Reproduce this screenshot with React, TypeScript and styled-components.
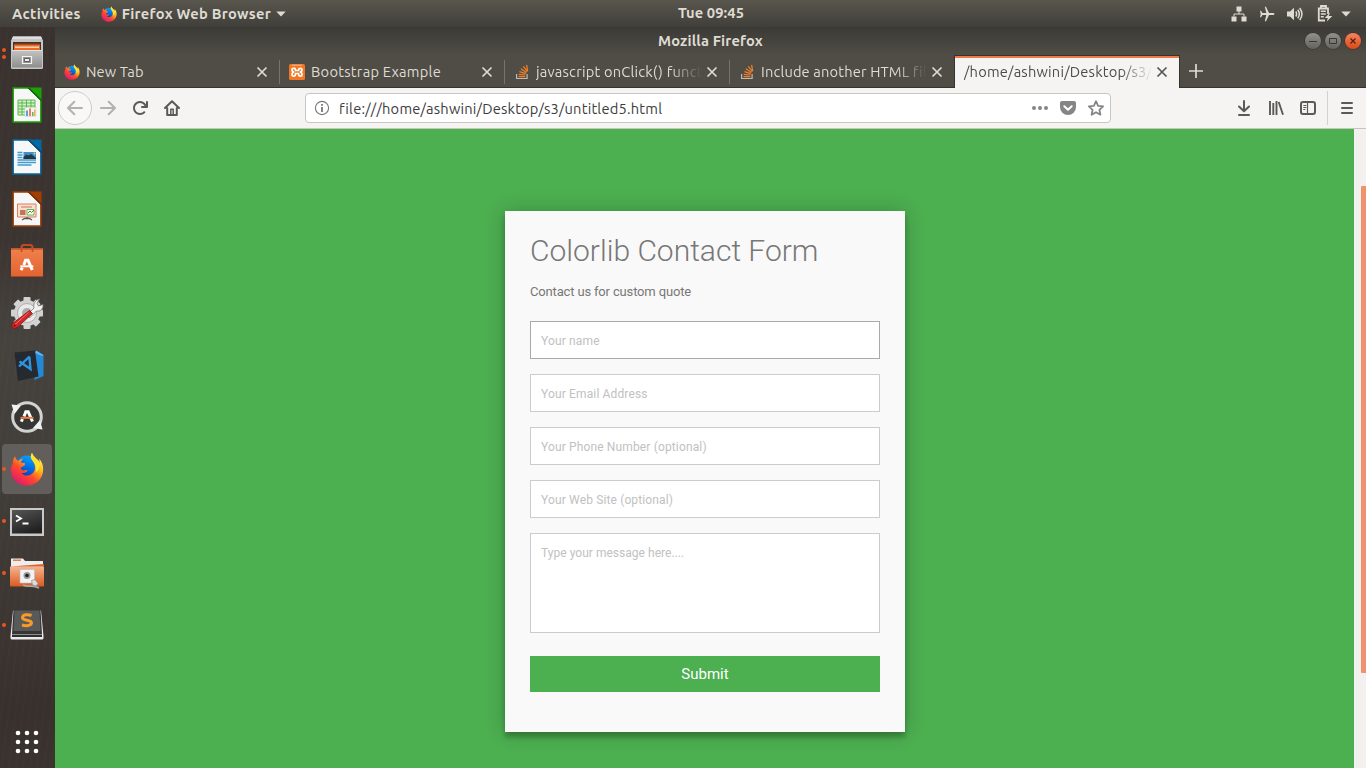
import React from "react";
import styled, { createGlobalStyle, css } from "styled-components";

const Global = createGlobalStyle`
  * { box-sizing: border-box; }
  body { margin: 0; overflow: hidden; background: #3a3330; }
  svg { display: block; flex: none; }
`;

const uiFont = `"Ubuntu", "Noto Sans", "Open Sans", sans-serif`;

const Desktop = styled.div`
  width: 1366px;
  height: 768px;
  display: flex;
  flex-direction: column;
  overflow: hidden;
  font-family: ${uiFont};
  font-size: 14.667px;
`;

const Label = styled.span<{ $spacing?: number }>`
  white-space: nowrap;
  letter-spacing: ${(p) => p.$spacing ?? 0.2}px;
`;

/* ---------- top panel ---------- */

const TopPanel = styled.header`
  height: 27px;
  flex: none;
  display: grid;
  grid-template-columns: 1fr auto 1fr;
  align-items: center;
  padding: 0 15px 0 12px;
  background: linear-gradient(#59564d, #403f3a);
  color: #dfdbd2;
  font-weight: 700;
  line-height: 27px;
`;

const PanelLeft = styled.div`
  display: flex;
  align-items: center;
`;

const AppMenu = styled.div`
  display: flex;
  align-items: center;
  margin-left: 20px;
  gap: 5px;
`;

const Clock = styled.div`
  padding-left: 59px;
  margin-top: -3px;
`;

const Tray = styled.div`
  display: flex;
  justify-content: flex-end;
  align-items: center;
  gap: 12px;
  & > :last-child { margin-left: -4px; }
`;

/* ---------- dock ---------- */

const Workspace = styled.div`
  flex: 1;
  min-height: 0;
  display: flex;
`;

const Dock = styled.nav`
  width: 55px;
  flex: none;
  display: flex;
  flex-direction: column;
  gap: 2px;
  padding: 1px 3px 0 2px;
  background:
    repeating-linear-gradient(97deg, rgba(255, 255, 255, 0.012) 0 2px, transparent 2px 7px),
    linear-gradient(#3a322f 0, #3b3431 28%, #46433e 42%, #423e3a 58%, #3e3834 75%, #38302d 92%, #3b3330 100%);
`;

const DockItem = styled.div<{ $active?: boolean; $last?: boolean }>`
  position: relative;
  height: 50px;
  flex: none;
  display: flex;
  align-items: center;
  justify-content: center;
  border-radius: 4px;
  ${(p) => p.$active && css`background: #625e5b;`}
  ${(p) => p.$last && css`margin: auto 0 1px;`}
`;

const Dots = styled.div`
  position: absolute;
  left: 0;
  top: 0;
  height: 100%;
  display: flex;
  flex-direction: column;
  justify-content: center;
  gap: 3px;
`;

const Dot = styled.i`
  width: 4px;
  height: 4px;
  border-radius: 50%;
  background: #e95420;
`;

/* ---------- browser window ---------- */

const Window = styled.main`
  flex: 1;
  min-width: 0;
  display: flex;
  flex-direction: column;
`;

const Chrome = styled.div`
  flex: none;
  height: 61px;
  display: flex;
  flex-direction: column;
  background: linear-gradient(#3b3a36, #504d46 28px, #504d46);
`;

const TitleBar = styled.div`
  height: 28px;
  display: grid;
  grid-template-columns: 1fr auto 1fr;
  align-items: center;
  padding-right: 5px;
  font-weight: 700;
  color: #dfdbd2;
`;

const WindowTitle = styled.div`
  padding-left: 5px;
  margin-top: -2px;
`;

const WindowButtons = styled.div`
  display: flex;
  justify-content: flex-end;
  gap: 4px;
`;

const WindowButton = styled.button<{ $close?: boolean }>`
  width: 16px;
  height: 16px;
  padding: 0;
  display: grid;
  place-items: center;
  border: 0;
  border-radius: 50%;
  background: ${(p) => (p.$close ? "linear-gradient(#f7845f, #dd4814)" : "linear-gradient(#92918c, #64625c)")};
  box-shadow: 0 0 0 0.6px #32302b;
`;

const TabStrip = styled.div`
  height: 33px;
  display: flex;
  border-bottom: 1px solid #36342f;
`;

const Tab = styled.div<{ $active?: boolean; $divider?: boolean }>`
  position: relative;
  width: 225px;
  flex: none;
  display: flex;
  align-items: center;
  padding: 1px 12px 0 9px;
  color: #dfdbd2;
  ${(p) =>
    p.$divider &&
    css`
      &::after {
        content: "";
        position: absolute;
        right: 0;
        top: 5px;
        width: 1px;
        height: 24px;
        background: #77746c;
      }
    `}
  ${(p) =>
    p.$active &&
    css`
      width: 226px;
      height: 33px;
      margin-left: -1px;
      padding: 0 11px 0 9px;
      background: #f5f4f2;
      color: #4c4c4c;
      border: solid #36342f;
      border-width: 1px 1px 0;
      box-shadow: inset 0 2px #f07746;
    `}
`;

const TabTitle = styled.div<{ $inset: number; $fade?: boolean }>`
  flex: 1;
  min-width: 0;
  overflow: hidden;
  margin-left: ${(p) => p.$inset}px;
  margin-right: 4px;
  line-height: 22px;
  ${(p) => p.$fade && css`mask-image: linear-gradient(to left, transparent 0, #000 32px);`}
`;

const NewTab = styled.div`
  width: 32px;
  display: grid;
  place-items: center;
  padding-bottom: 1px;
`;

const NavBar = styled.div`
  height: 41px;
  flex: none;
  display: flex;
  align-items: center;
  padding: 0 11px 0 3px;
  background: #f5f4f2;
  border-bottom: 1px solid #c8c5c1;
  color: #5a5a5a;
`;

const BackButton = styled.div`
  width: 34px;
  height: 34px;
  display: grid;
  place-items: center;
  border: 1px solid #cfcdca;
  border-radius: 50%;
  background: #f9f8f7;
  color: #b2b1af;
`;

const NavIcons = styled.div`
  display: flex;
  gap: 16px;
  margin-left: 8px;
`;

const UrlBar = styled.div`
  width: 806px;
  height: 30px;
  margin-left: 125px;
  display: flex;
  align-items: center;
  padding: 0 6px 0 8px;
  background: #fff;
  border: 1px solid #c9c6c3;
  border-radius: 4px;
  color: #3c3c3c;
`;

const UrlText = styled.div`
  flex: 1;
  margin-left: 9px;
  padding-top: 1px;
  line-height: 22px;
`;

const UrlActions = styled.div`
  display: flex;
  gap: 12px;
  color: #858585;
`;

const RightTools = styled.div`
  margin-left: auto;
  display: flex;
  align-items: center;
  gap: 16px;
`;

const ToolDivider = styled.i`
  width: 1px;
  height: 34px;
  margin: 0 -5px 0 -5px;
  background: #d3d1ce;
`;

/* ---------- page ---------- */

const Viewport = styled.div`
  flex: 1;
  min-height: 0;
  display: flex;
`;

const Page = styled.div`
  flex: 1;
  display: flex;
  justify-content: center;
  align-items: flex-start;
  padding: 82px 0 0 1px;
  background: #4caf50;
  font-family: Roboto, sans-serif;
`;

const ScrollTrack = styled.div`
  width: 12px;
  flex: none;
  padding: 57px 0 0 7px;
  background: #f2f1f0;
`;

const ScrollThumb = styled.div`
  height: 487px;
  background: #f0926e;
  border-radius: 1px 0 0 1px;
`;

const Card = styled.form`
  width: 400px;
  height: 521px;
  display: flex;
  flex-direction: column;
  padding: 25px;
  background: #f9f9f9;
  box-shadow: 0 0 20px rgba(0, 0, 0, 0.2), 0 5px 5px rgba(0, 0, 0, 0.24);
  color: #777;
`;

const Title = styled.h3`
  margin: 0;
  font-size: 30px;
  font-weight: 300;
  line-height: 30px;
`;

const Subtitle = styled.h4`
  margin: 18px 0 21px;
  font-size: 13px;
  font-weight: 400;
  line-height: 16px;
  letter-spacing: -0.16px;
`;

const fieldStyle = css`
  display: block;
  width: 100%;
  flex: none;
  margin: 0 0 15px;
  padding: 11px 10px 9px;
  background: #fff;
  border: 1px solid #ccc;
  border-radius: 0;
  outline: 0;
  resize: none;
  font: 400 12px/16px Roboto, sans-serif;
  letter-spacing: 0.14px;
  &::placeholder { color: #c1c1c1; opacity: 1; }
`;

const Field = styled.input<{ $hover?: boolean }>`
  ${fieldStyle}
  height: 38px;
  ${(p) => p.$hover && css`border-color: #aaa;`}
`;

const Message = styled.textarea`
  ${fieldStyle}
  height: 100px;
  margin-bottom: 23px;
  letter-spacing: 0.03px;
`;

const Submit = styled.button`
  height: 36px;
  padding: 0;
  border: 0;
  background: #4caf50;
  color: #fff;
  font: 400 15px/36px Roboto, sans-serif;
`;

/* ---------- icons ---------- */

const Firefox = ({ size, id }: { size: number; id: string }) => (
  <svg width={size} height={size} viewBox="0 0 34 34">
    <defs>
      <linearGradient id={id + "a"} x1="0.85" y1="0.1" x2="0.2" y2="0.95">
        <stop offset="0" stopColor="#fff44f" />
        <stop offset="0.3" stopColor="#ffb81c" />
        <stop offset="0.6" stopColor="#ff4a2a" />
        <stop offset="1" stopColor="#e3166f" />
      </linearGradient>
      <linearGradient id={id + "b"} x1="0.7" y1="0" x2="0.3" y2="1">
        <stop offset="0" stopColor="#0aa6fb" />
        <stop offset="0.55" stopColor="#0060df" />
        <stop offset="1" stopColor="#20217c" />
      </linearGradient>
    </defs>
    <circle cx="17" cy="16.5" r="13" fill={`url(#${id}b)`} />
    <path
      d="M22 .8c-1.8 3-1.5 5.3.3 7.500 2 2.600 3 5 2.700 8-.4 4.500-4 7.200-7.800 7.200-2.500 0-4.500-1-5.700-2.600 2.300.6 4.200-.1 5.800-1.600.5-.5.3-1.100-.4-1.200-1.700-.1-2.700.7-4.300.2-1.300-.4-1.800-1.500-1.700-2.700l3.800-2.200c.3-.8.3-1.600.1-2.300-1.400.1-2.900-.1-3.700-.7.1-1.600 1-3 2.200-4-2.100.1-3.800 1-5 2.400C6.800 8.300 5.600 6.700 5 4.600 3.300 6.600 2.800 9 2.800 11.600.8 15 .3 18.300 1.200 21.700 3 28.800 9.500 33.500 17 33.500c9.300 0 16.200-7 16.200-16.300 0-4.300-1.500-8-4.200-10.700.5 1.800.6 3 .5 4.500C27.700 7.500 23.300 5.500 22 .8z"
      fill={`url(#${id}a)`}
    />
    <path d="M22 .8c-1.800 3-1.500 5.300.3 7.500 2.700 3.500 4.700 7 3.400 12.200 3-2.400 5-7 3.800-10.500C27.700 6.500 23.300 5.500 22 .8z" fill="#ffe22e" />
  </svg>
);

const FilesIcon = () => (
  <svg width="34" height="36" viewBox="0 0 34 36">
    <defs>
      <linearGradient id="cab" x2="0" y2="1">
        <stop offset="0" stopColor="#c4c4c4" />
        <stop offset="1" stopColor="#8e8e8e" />
      </linearGradient>
    </defs>
    <path d="M3 1.500h28l2 4v27a1.500 1.500 0 0 1-1.500 1.500h-29A1.500 1.500 0 0 1 1 32.500v-27z" fill="#c6c6c6" />
    <path d="M3 1.500h28l1 2.500H2z" fill="#dedede" />
    <path d="M3 7h28v9H3z" fill="#3b3734" />
    <path d="M5 8h24v2H5z" fill="#7a3412" />
    <path d="M4 9.500h26v6H4z" fill="#e96b24" />
    <path d="M5 11.500h24v1.400H5z" fill="#ffe0c2" />
    <path d="M2 15h30v17.500H2z" fill="url(#cab)" />
    <path d="M2 15h30v1H2z" fill="#e0e0e0" />
    <path d="M12.500 21.500h9v7h-9z" fill="#929292" stroke="#f4f4f4" strokeWidth="1.200" />
    <path d="M14.500 23.500h5v3h-5z" fill="#eee" stroke="#555" strokeWidth=".9" />
  </svg>
);

const Doc = ({ color, dark, children }: { color: string; dark: string; children: React.ReactNode }) => (
  <svg width="30" height="36" viewBox="0 0 30 36">
    <path d="M1.200 1h16L28.800 13v22H1.200z" fill="#f7f7f7" stroke={color} strokeWidth="1.400" />
    <path d="M17 .4h12.500V12.500z" fill={color} />
    <path d="M17 .5L29.500 13v1.500L15.500 1z" fill={dark} />
    {children}
  </svg>
);

const CalcIcon = () => (
  <Doc color="#18a303" dark="#0d5c05">
    <path d="M6 13h17v15H6z" fill="#d6f0cf" />
    <path d="M6 13h17v15H6zM6 16h17M6 19h17M6 22h17M6 25h17M10 13v15M14.500 13v15M19 13v15" fill="none" stroke="#5cb84a" strokeWidth="1" />
    <path d="M13 20.500h11v9H13z" fill="#f5f5f5" stroke="#ccc" strokeWidth=".5" />
    <path d="M14 23.500h2V29h-2z" fill="#5ba1d8" />
    <path d="M17 21.500h2V29h-2z" fill="#e98057" />
    <path d="M20 25h1.500v4H20z" fill="#69b356" />
    <path d="M22 22.500h1.500V29H22z" fill="#edb44d" />
  </Doc>
);

const WriterIcon = () => (
  <Doc color="#0369a3" dark="#084469">
    <path d="M5.500 13.500h5M5.500 16h5M5.500 18.500h5M5.500 21h18.500M5.500 23.500h18.500M5.500 26h14" stroke="#3f9bd0" strokeWidth="1.300" />
    <path d="M11.500 13h12.500v7H11.500z" fill="#3d8fd0" />
    <path d="M11.500 20v-2l3-2.500 2 1 2.500-1.500 5 4v1z" fill="#263840" />
    <circle cx="22.500" cy="14.500" r="1" fill="#f9dc3c" />
  </Doc>
);

const ImpressIcon = () => (
  <Doc color="#a33e03" dark="#6b2802">
    <path d="M5.500 13h18.500v13H5.500z" fill="#fae0d3" stroke="#df7d55" strokeWidth="1" />
    <path d="M9 16h11" stroke="#d98c6e" strokeWidth="1.300" />
    <path d="M8 19h5.500v5H8z" fill="#c97355" />
    <path d="M15 18.500h7v5.500h-7z" fill="#fff" stroke="#6ab556" strokeWidth="1" />
    <path d="M16 22l2-2 1.500 1.500L22 19" fill="none" stroke="#319b25" />
    <path d="M15 26v1.500M10 29l2.500-1.500h5L20 29" fill="none" stroke="#555" strokeWidth="1.300" />
  </Doc>
);

const ABars = ({ bar = "#fff" }: { bar?: string }) => (
  <g fill="none">
    <path d="M14 18l1.800-4.700h2.400l4.300 9.700M12.500 20.500l-1.200 2.700" stroke="#fff" strokeWidth="3" />
    <path d="M10.500 19.300h13" stroke={bar} strokeWidth="2" />
  </g>
);

const SoftwareIcon = () => (
  <svg width="34" height="36" viewBox="0 0 34 36">
    <defs>
      <linearGradient id="bag" x2="0" y2="1">
        <stop offset="0" stopColor="#f0804d" />
        <stop offset="1" stopColor="#e2632f" />
      </linearGradient>
    </defs>
    <path d="M11.500 8V4.500q0-2.500 2.500-2.500h6q2.500 0 2.500 2.500V8" fill="none" stroke="#b5421b" strokeWidth="1.800" />
    <path d="M1 5.500h32V34H1z" fill="url(#bag)" />
    <path d="M1 5.500h32v1.500H1z" fill="#d85c2c" />
    <path d="M11.500 9V4.500q0-2.500 2.500-2.500h6q2.500 0 2.500 2.500V9" fill="none" stroke="#c44d22" strokeWidth="1.600" />
    <g transform="translate(-.2 4)"><ABars /></g>
    <path d="M1 33h32v1H1z" fill="#a94520" />
  </svg>
);

const SettingsIcon = () => (
  <svg width="36" height="36" viewBox="0 0 36 36">
    <g fill="#d2d2d2">
      {[0, 45, 90, 135].map((a) => (
        <rect key={a} x="14.500" y="2" width="7" height="32" rx="1" transform={`rotate(${a} 18 18)`} />
      ))}
      <circle cx="18" cy="18" r="13" />
    </g>
    <circle cx="18" cy="18" r="9.500" fill="#e9e9e9" stroke="#b0b0b0" />
    <circle cx="18" cy="18" r="5" fill="#aaa" />
    <path d="M18 20l7-7c-1-4 1-8 5.500-9l-2.500 4.500 1.500 2.500 4.500-1.500c.5 4.500-3 7.500-6.500 6.500l-7 7z" fill="#f1f1f1" stroke="#777" strokeWidth=".8" />
    <path d="M20.500 15.500l3 3L8 32.500c-3 2.300-6.500-.5-4.500-4z" fill="#d32525" stroke="#891111" strokeWidth=".8" />
    <path d="M19.500 17.500L6 29.500" stroke="#f07575" strokeWidth="1" />
    <circle cx="5.800" cy="30.500" r="1" fill="#691010" />
  </svg>
);

const CodeIcon = () => (
  <svg width="34" height="36" viewBox="0 0 34 36">
    <path d="M24 4l9.500 4v21l-9 4z" fill="#2489d5" />
    <path d="M26 3.500l7.500 4.500-1.500 1-7-3z" fill="#62b8f4" />
    <path d="M4.500 5.500L25 3.500l3.500 26L8 34z" fill="#252a31" />
    <path d="M19.500 9.500L9 19.500M9.500 14.500l11 7.500-1.200-12.500" fill="none" stroke="#2c95de" strokeWidth="2.400" />
  </svg>
);

const UpdaterIcon = () => (
  <svg width="36" height="36" viewBox="0 0 36 36">
    <circle cx="18" cy="18" r="14.300" fill="#363634" stroke="#d2d2d2" strokeWidth="3" />
    <path d="M2.500 5.500l9.500 1-6.500 8.500z" fill="#f2f2f2" />
    <path d="M33.500 30.500l-9.500-1.500 7-8z" fill="#f2f2f2" />
    <g transform="translate(1 -.5)"><ABars bar="#f07b45" /></g>
  </svg>
);

const TerminalIcon = () => (
  <svg width="36" height="32" viewBox="0 -2 36 32">
    <defs>
      <linearGradient id="term" x2=".5" y2="1">
        <stop offset="0" stopColor="#565656" />
        <stop offset="1" stopColor="#222" />
      </linearGradient>
    </defs>
    <path d="M1 1h34v28H1z" fill="#c9c9c9" />
    <path d="M3 3h30v23.500H3z" fill="url(#term)" />
    <path d="M7 8.500l5 3-5 3M13.500 16.500h6" fill="none" stroke="#fff" strokeWidth="1.800" />
  </svg>
);

const DisksIcon = () => (
  <svg width="36" height="36" viewBox="0 -2 36 36">
    <defs>
      <linearGradient id="fold" x2="0" y2="1">
        <stop offset="0" stopColor="#f5b48f" />
        <stop offset="1" stopColor="#db5a20" />
      </linearGradient>
    </defs>
    <path d="M2 1.500h12l2 2.500h18v8H2z" fill="#ededed" />
    <path d="M4 2.500h8v1.500H4z" fill="#e87d48" />
    <path d="M1 9.500h34v19a1 1 0 0 1-1 1H2a1 1 0 0 1-1-1z" fill="url(#fold)" />
    <path d="M1 9.500L35 7v2.500z" fill="#d96430" />
    <path d="M11 12.500h14.500V26H11z" fill="#f2f2f2" stroke="#bbb" strokeWidth=".6" />
    <circle cx="18" cy="18.500" r="3.500" fill="#999" />
    <circle cx="18" cy="18.500" r="1.800" fill="#222" />
    <path d="M14 28c6 3 9-1 16 3" fill="none" stroke="#a9a9a9" strokeWidth="1.600" />
    <path d="M22.500 23.500l3.500-1 3 4-2 2.500-3.500-1z" fill="#ddd" stroke="#888" strokeWidth=".7" />
  </svg>
);

const SublimeIcon = () => (
  <svg width="36" height="32" viewBox="0 0 36 32">
    <path d="M4 1.500h28L34.500 27v2a1.500 1.500 0 0 1-1.500 1.500H3A1.500 1.500 0 0 1 1.500 29v-2z" fill="#e9e9e9" />
    <path d="M4.500 1h27l1.500 24.500H3z" fill="#363636" />
    <path d="M5.500 1.500h25L31.500 22h-27z" fill="#595959" />
    <path d="M3 26h30v2H3z" fill="#303030" />
    <path d="M22.500 6.500c-3-1.300-9-1.500-9 2.300 0 3.300 9 1.700 9 5 0 3.300-6.500 3.300-9.500 2" fill="none" stroke="#fa9a28" strokeWidth="3" />
  </svg>
);

const AppsIcon = () => (
  <svg width="26" height="26" viewBox="0 0 26 26" fill="#fff">
    {[4, 13, 22].map((y) => [4, 13, 22].map((x) => <circle key={`${x}-${y}`} cx={x} cy={y} r="2.300" />))}
  </svg>
);

const Caret = () => (
  <svg width="10" height="6" viewBox="0 0 10 6"><path d="M.3.500h9.400L5 5.500z" fill="#dfdbd2" /></svg>
);

const CloseX = ({ color = "#dfdbd2" }: { color?: string }) => (
  <svg width="12" height="12" viewBox="0 0 12 12">
    <path d="M1.500 1.500l9 9M10.500 1.500l-9 9" stroke={color} strokeWidth="1.700" />
  </svg>
);

const XamppIcon = () => (
  <svg width="16" height="16" viewBox="0 0 16 16">
    <rect width="16" height="16" rx="1.500" fill="#f37623" />
    <path d="M3 1.200h10" stroke="#fff" strokeWidth=".8" opacity=".6" />
    <path
      d="M5.500 4.300H4.200Q3 4.300 3 5.500q0 2.500 2.200 2.500Q3 8 3 10.700q0 1.500 1.500 1.500 2 0 2-2.200V9.500h3v.5q0 2.200 2 2.200 1.500 0 1.500-1.500Q13 8 10.800 8 13 8 13 5.500q0-1.200-1.500-1.200-2 0-2 2.200h-3q0-2.200-1-2.200z"
      fill="none"
      stroke="#fff"
      strokeWidth="1.700"
    />
  </svg>
);

const StackIcon = () => (
  <svg width="16" height="16" viewBox="-1 0 16 16" fill="none">
    <path d="M1.600 10v4.500h10.500V10" stroke="#bcbbb8" strokeWidth="1.200" />
    <path d="M3.600 12.600h6.700M3.800 10.300l6.600.7M4.400 7.700l6.400 1.900M5.900 4.800l5.600 3.700M8.400 2.300l4 5.300M11.600.8l1.100 6.400" stroke="#f48024" strokeWidth="1.200" />
  </svg>
);

const NetworkIcon = () => (
  <svg width="16" height="16" viewBox="0 0 16 16">
    <path d="M5.500.5h5v5h-5zM.5 10.500h5v5h-5zM10.500 10.500h5v5h-5z" fill="#dfdbd2" />
    <path d="M8 5v3M3 10.500V8h10v2.500" fill="none" stroke="#dfdbd2" />
  </svg>
);

const PlaneIcon = () => (
  <svg width="16" height="16" viewBox="0 0 16 16" fill="#dfdbd2">
    <path d="M15.500 8c0-.7-.8-1-2-1H10L7 .8H5.800L7.300 7H3.500L2 4.800H1L1.700 8 1 11.200h1L3.500 9h3.800l-1.500 6.200H7L10 9h3.500c1.200 0 2-.3 2-1z" />
  </svg>
);

const SoundIcon = () => (
  <svg width="17" height="16" viewBox="0 0 17 16" fill="none" stroke="#dfdbd2">
    <path d="M0 5.500h3l4-3.700v12.400l-4-3.700H0z" fill="#dfdbd2" stroke="none" />
    <path d="M8.800 5.500q1.600 2.500 0 5M10.800 3.700q3 4.300 0 8.600M12.700 2q4.500 6 0 12" strokeWidth="1.500" />
  </svg>
);

const BatteryIcon = () => (
  <svg width="17" height="17" viewBox="-1 0 17 17">
    <path d="M4 2.800V1h5v1.800M8 15.500H1.800v-12H11V9" fill="none" stroke="#dfdbd2" strokeWidth="1.800" />
    <path d="M3.800 6.200h5M3.800 9h5M3.800 11.800h3" stroke="#dfdbd2" strokeWidth="1.400" />
    <path d="M13 7.500L7.800 13h3l-1 3.500 5.500-5.500h-3.500z" fill="#dfdbd2" />
  </svg>
);

const Arrow = ({ flip, color = "#b2b1af" }: { flip?: boolean; color?: string }) => (
  <svg width="16" height="16" viewBox="0 0 16 16" fill="none" stroke={color} strokeWidth="2" strokeLinecap="round" strokeLinejoin="round">
    <path d={flip ? "M1 8h14M8.700 1.800L15 8l-6.300 6.200" : "M15 8H1M7.300 1.800L1 8l6.300 6.200"} />
  </svg>
);

const ReloadIcon = () => (
  <svg width="16" height="16" viewBox="0 0 16 16" fill="currentColor">
    <path d="M15 1a1 1 0 0 0-1 1v2.418A6.995 6.995 0 1 0 8 15a6.954 6.954 0 0 0 4.950-2.050 1 1 0 0 0-1.414-1.414A5.019 5.019 0 1 1 12.549 6H10a1 1 0 0 0 0 2h5a1 1 0 0 0 1-1V2a1 1 0 0 0-1-1z" />
  </svg>
);

const HomeIcon = () => (
  <svg width="16" height="16" viewBox="0 0 16 16" fill="none" stroke="currentColor" strokeWidth="2" strokeLinecap="round" strokeLinejoin="round">
    <path d="M1 8l7-6.800L15 8M3.200 8v7h9.600V8" />
    <path d="M6.800 14.500V9.200h2.400v5.300" strokeWidth="1.500" />
  </svg>
);

const InfoIcon = () => (
  <svg width="16" height="16" viewBox="0 0 16 16" fill="none" stroke="#777">
    <circle cx="8" cy="8" r="6.600" strokeWidth="1.100" />
    <path d="M8 7v5M8 4v1.700" strokeWidth="1.800" />
  </svg>
);

const MoreIcon = () => (
  <svg width="16" height="16" viewBox="0 0 16 16" fill="currentColor">
    <circle cx="2" cy="8" r="2" /><circle cx="8" cy="8" r="2" /><circle cx="14" cy="8" r="2" />
  </svg>
);

const PocketIcon = () => (
  <svg width="16" height="16" viewBox="0 0 16 16">
    <path d="M2 1h12a2 2 0 0 1 2 2v4a8 8 0 0 1-16 0V3a2 2 0 0 1 2-2z" fill="currentColor" />
    <path d="M4.300 6.300L8 9.800l3.700-3.500" fill="none" stroke="#fff" strokeWidth="2" strokeLinecap="round" strokeLinejoin="round" />
  </svg>
);

const StarIcon = () => (
  <svg width="16" height="16" viewBox="0 0 16 16" fill="none" stroke="currentColor" strokeWidth="1.800" strokeLinejoin="round">
    <path d="M8 1.200l2.100 4.600 5 .6-3.700 3.400 1 4.900L8 12.200l-4.400 2.500 1-4.900L.9 6.400l5-.6z" />
  </svg>
);

const DownloadIcon = () => (
  <svg width="16" height="16" viewBox="0 0 16 16" fill="none" stroke="currentColor" strokeWidth="2" strokeLinecap="round" strokeLinejoin="round">
    <path d="M8 1v10M3 6.500L8 11.300l5-4.800M3 15h10" />
  </svg>
);

const LibraryIcon = () => (
  <svg width="16" height="16" viewBox="0 0 16 16" fill="none" stroke="currentColor" strokeWidth="1.900">
    <path d="M2 1v14M5.300 3v12M8.500 1v14M10.700 2l4.300 12.700" />
  </svg>
);

const SidebarIcon = () => (
  <svg width="16" height="16" viewBox="0 0 16 16" fill="none" stroke="currentColor">
    <rect x="1" y="2" width="14" height="12" rx="2" strokeWidth="2" />
    <path d="M7.500 3v10" strokeWidth="1.200" />
    <path d="M3.300 5.500h3M3.300 7.500h3M3.300 9.500h2" />
  </svg>
);

const MenuIcon = () => (
  <svg width="16" height="16" viewBox="0 0 16 16" stroke="currentColor" strokeWidth="2" strokeLinecap="round">
    <path d="M3 3h10M3 8h10M3 13h10" />
  </svg>
);

const dockItems: { icon: React.ReactNode; windows?: number; active?: boolean }[] = [
  { icon: <FilesIcon />, windows: 2 },
  { icon: <CalcIcon /> },
  { icon: <WriterIcon /> },
  { icon: <ImpressIcon /> },
  { icon: <SoftwareIcon /> },
  { icon: <SettingsIcon /> },
  { icon: <CodeIcon /> },
  { icon: <UpdaterIcon /> },
  { icon: <Firefox size={34} id="dock" />, windows: 1, active: true },
  { icon: <TerminalIcon />, windows: 1 },
  { icon: <DisksIcon />, windows: 1 },
  { icon: <SublimeIcon />, windows: 1 },
];

export default function App() {
  return (
    <Desktop>
      <Global />
      <TopPanel>
        <PanelLeft>
          <Label $spacing={0.35}>Activities</Label>
          <AppMenu>
            <Firefox size={16} id="panel" />
            <Label $spacing={0.28}>Firefox Web Browser</Label>
            <Caret />
          </AppMenu>
        </PanelLeft>
        <Clock><Label $spacing={0.1}>Tue 09:45</Label></Clock>
        <Tray>
          <NetworkIcon />
          <PlaneIcon />
          <SoundIcon />
          <BatteryIcon />
          <Caret />
        </Tray>
      </TopPanel>
      <Workspace>
        <Dock>
          {dockItems.map((item, i) => (
            <DockItem key={i} $active={item.active}>
              <Dots>{Array.from({ length: item.windows ?? 0 }, (_, n) => <Dot key={n} />)}</Dots>
              {item.icon}
            </DockItem>
          ))}
          <DockItem $last><AppsIcon /></DockItem>
        </Dock>
        <Window>
          <Chrome>
            <TitleBar>
              <span />
              <WindowTitle><Label $spacing={0.15}>Mozilla Firefox</Label></WindowTitle>
              <WindowButtons>
                <WindowButton type="button" aria-label="Minimize">
                  <svg width="10" height="10" viewBox="0 0 10 10"><path d="M1 5.500h8" stroke="#3a3833" /></svg>
                </WindowButton>
                <WindowButton type="button" aria-label="Maximize">
                  <svg width="10" height="10" viewBox="0 0 10 10"><path d="M1.500 2.500h7v5h-7z" fill="none" stroke="#3a3833" /></svg>
                </WindowButton>
                <WindowButton type="button" aria-label="Close" $close>
                  <svg width="10" height="10" viewBox="0 0 10 10"><path d="M2.500 2.500l5 5M7.500 2.500l-5 5" stroke="#4a2414" strokeWidth="1.300" /></svg>
                </WindowButton>
              </WindowButtons>
            </TitleBar>
            <TabStrip>
              <Tab $divider>
                <Firefox size={16} id="tab" />
                <TabTitle $inset={6}><Label $spacing={0.1}>New Tab</Label></TabTitle>
                <CloseX />
              </Tab>
              <Tab $divider>
                <XamppIcon />
                <TabTitle $inset={6}><Label $spacing={0.25}>Bootstrap Example</Label></TabTitle>
                <CloseX />
              </Tab>
              <Tab $divider>
                <StackIcon />
                <TabTitle $inset={6} $fade><Label>javascript onClick() funct</Label></TabTitle>
                <CloseX />
              </Tab>
              <Tab>
                <StackIcon />
                <TabTitle $inset={6} $fade><Label $spacing={0.15}>Include another HTML fil</Label></TabTitle>
                <CloseX />
              </Tab>
              <Tab $active>
                <TabTitle $inset={0} $fade><Label>/home/ashwini/Desktop/s3/</Label></TabTitle>
                <CloseX color="#555" />
              </Tab>
              <NewTab>
                <svg width="14" height="14" viewBox="0 0 14 14"><path d="M7 0v14M0 7h14" stroke="#dfdbd2" strokeWidth="1.700" /></svg>
              </NewTab>
            </TabStrip>
          </Chrome>
          <NavBar>
            <BackButton><Arrow /></BackButton>
            <NavIcons>
              <Arrow flip />
              <ReloadIcon />
              <HomeIcon />
            </NavIcons>
            <UrlBar>
              <InfoIcon />
              <UrlText><Label>file:///home/ashwini/Desktop/s3/untitled5.html</Label></UrlText>
              <UrlActions>
                <MoreIcon />
                <PocketIcon />
                <StarIcon />
              </UrlActions>
            </UrlBar>
            <RightTools>
              <DownloadIcon />
              <LibraryIcon />
              <SidebarIcon />
              <ToolDivider />
              <MenuIcon />
            </RightTools>
          </NavBar>
          <Viewport>
            <Page>
              <Card onSubmit={(e) => e.preventDefault()}>
                <Title>Colorlib Contact Form</Title>
                <Subtitle>Contact us for custom quote</Subtitle>
                <Field placeholder="Your name" $hover />
                <Field placeholder="Your Email Address" />
                <Field placeholder="Your Phone Number (optional)" />
                <Field placeholder="Your Web Site (optional)" />
                <Message placeholder="Type your message here...." />
                <Submit type="submit">Submit</Submit>
              </Card>
            </Page>
            <ScrollTrack><ScrollThumb /></ScrollTrack>
          </Viewport>
        </Window>
      </Workspace>
    </Desktop>
  );
}
